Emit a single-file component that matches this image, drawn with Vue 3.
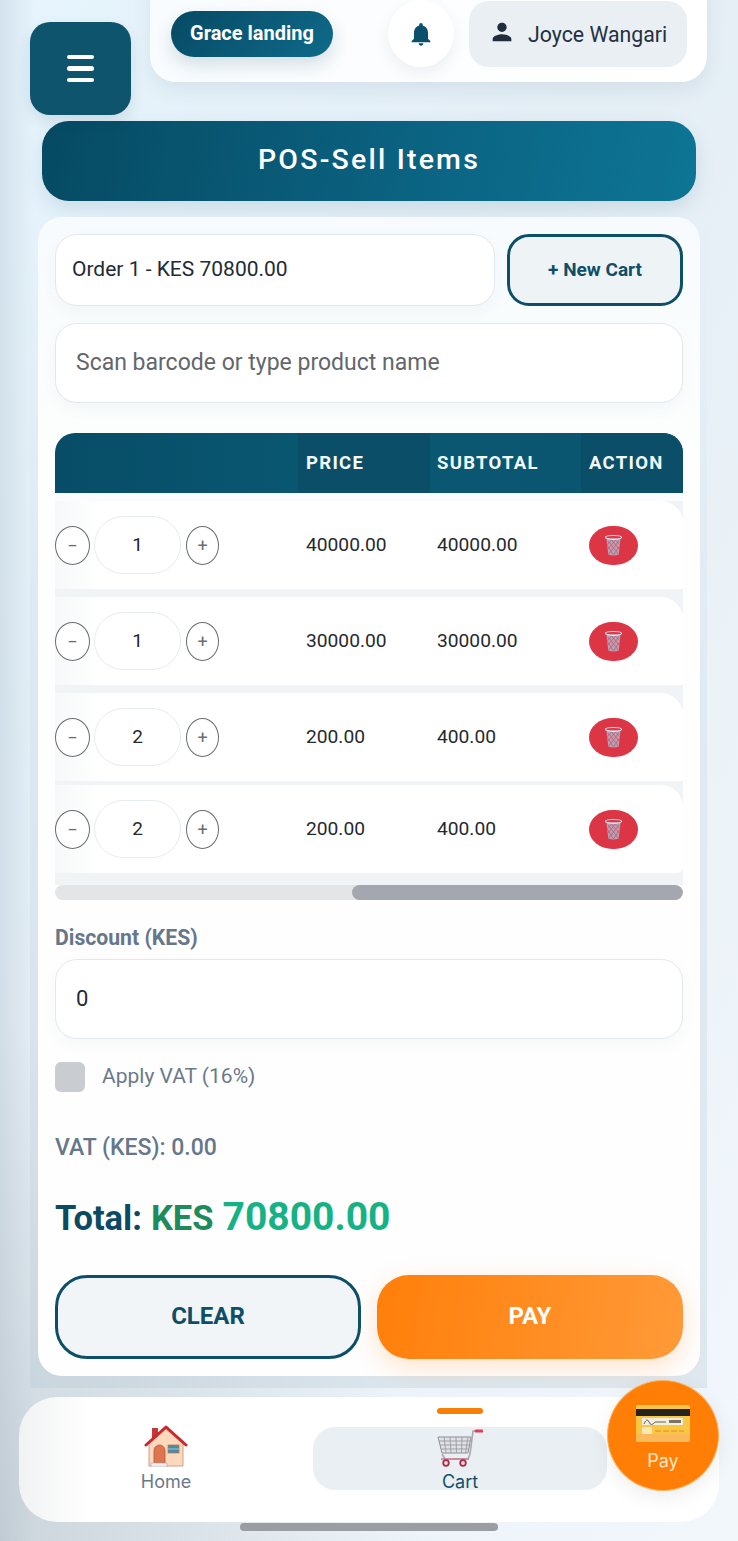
<script setup>
const rows = [
  { id: 1, qty: 1, price: '40000.00', subtotal: '40000.00', gap: 'sep' },
  { id: 2, qty: 1, price: '30000.00', subtotal: '30000.00', gap: 'sep' },
  { id: 3, qty: 2, price: '200.00', subtotal: '400.00', gap: 'tight' },
  { id: 4, qty: 2, price: '200.00', subtotal: '400.00', gap: 'end' }
]
</script>

<template>
  <div class="page">
    <header class="top">
      <button class="menu" aria-label="Menu"><span></span><span></span><span></span></button>
      <div class="topbar">
        <div class="branch">Grace landing</div>
        <div class="bell">
          <svg viewBox="0 0 24 24" width="28" height="28"><path fill="#0b4f6c" d="M12 22c1.100 0 2-.9 2-2h-4c0 1.100.9 2 2 2zm6-6v-5c0-3.070-1.630-5.640-4.500-6.320V4c0-.83-.67-1.500-1.500-1.500s-1.500.67-1.500 1.500v.68C7.640 5.360 6 7.920 6 11v5l-2 2v1h16v-1l-2-2z"/></svg>
        </div>
        <div class="user">
          <svg viewBox="0 0 24 24" width="28" height="28"><path fill="#1f2d3d" d="M12 12c2.210 0 4-1.790 4-4s-1.790-4-4-4-4 1.790-4 4 1.790 4 4 4zm0 2c-2.670 0-8 1.340-8 4v2h16v-2c0-2.660-5.330-4-8-4z"/></svg>
          <span>Joyce Wangari</span>
        </div>
      </div>
    </header>

    <h1 class="title">POS-Sell Items</h1>

    <main class="panel">
      <section class="card">
        <div class="order-row">
          <input class="field order" readonly value="Order 1 - KES 70800.00" />
          <button class="new-cart">+ New Cart</button>
        </div>
        <input class="field search" placeholder="Scan barcode or type product name" />

        <div class="table">
          <div class="thead">
            <div></div>
            <div class="th dark">PRICE</div>
            <div class="th">SUBTOTAL</div>
            <div class="th dark">ACTION</div>
          </div>
          <div class="tbody">
            <div v-for="r in rows" :key="r.id" class="row" :class="r.gap">
              <div class="qty">
                <button class="step minus">−</button>
                <div class="qty-val">{{ r.qty }}</div>
                <button class="step plus">+</button>
              </div>
              <div class="cell">{{ r.price }}</div>
              <div class="cell">{{ r.subtotal }}</div>
              <div class="cell">
                <button class="del" aria-label="Delete">
                  <svg viewBox="0 0 20 24" width="19" height="23">
                    <path d="M2.500 4 L4.500 21.500 Q10 23.500 15.500 21.500 L17.500 4 Z" fill="#b7a0b3" />
                    <path d="M4 7 L15 21 M7 5 L16 16 M11 5 L16.500 11 M3.500 12 L10 22 M16 7 L5 21 M13 5 L4 16 M9 5 L3.500 11 M16 13 L10 22" stroke="#c9566b" stroke-width=".8" fill="none" />
                    <ellipse cx="10" cy="3.500" rx="8.500" ry="2" fill="none" stroke="#efe0e4" stroke-width="1.200" />
                  </svg>
                </button>
              </div>
            </div>
          </div>
        </div>

        <div class="scrollbar"><div class="thumb"></div></div>

        <label class="disc-label">Discount (KES)</label>
        <input class="field discount" readonly value="0" />

        <div class="vat-check">
          <span class="box"></span>
          <span class="vat-text">Apply VAT (16%)</span>
        </div>

        <div class="vat-line">VAT (KES): 0.00</div>

        <div class="total">
          <span class="t-label">Total:</span>
          <span class="t-cur">KES</span>
          <span class="t-val">70800.00</span>
        </div>

        <div class="actions">
          <button class="btn clear">CLEAR</button>
          <button class="btn pay">PAY</button>
        </div>
      </section>
    </main>

    <nav class="nav">
      <a class="tab">
        <svg class="tab-icon home-icon" viewBox="0 0 44 42" width="44" height="42">
          <rect x="8" y="3" width="6" height="10" fill="#c5383a" />
          <path d="M5 19 L22 4 L39 19 V41 H5 Z" fill="#fcd9bd" stroke="#c98a70" stroke-width=".8" />
          <path d="M10 38 V25.500 A5.500 5.500 0 0 1 21 25.500 V38 Z" fill="#dd7550" stroke="#b9553a" stroke-width=".8" />
          <rect x="24" y="20" width="11" height="8" fill="#4d8aa6" stroke="#b9774f" stroke-width=".8" />
          <path d="M24 24 H35" stroke="#9cc7d8" stroke-width="1" />
          <rect x="7" y="38" width="16" height="4" fill="#eceef0" stroke="#a9a9b0" stroke-width=".6" />
          <path d="M2 20 L22 2 L42 20" fill="none" stroke="#c8282e" stroke-width="3" stroke-linecap="round" stroke-linejoin="round" />
        </svg>
        <span>Home</span>
      </a>
      <a class="tab active">
        <i class="indicator"></i>
        <svg class="tab-icon" viewBox="0 0 46 40" width="46" height="40">
          <path d="M1 10 L34 10 L31 26 L5 26 Z" fill="#e0e1e4" stroke="#8d8f96" stroke-width="1" />
          <path d="M7 10 L9 26 M13 10 L14 26 M19 10 L19.500 26 M25 10 L24.500 26 M31 10 L28.500 26 M2 14 H33 M3 18 H32 M4 22 H31.500" stroke="#999ba2" stroke-width=".9" />
          <path d="M5 27 L8 32 H31 L33 27 L36 4 H42" fill="none" stroke="#a9a9ae" stroke-width="1.600" />
          <path d="M39 4 H45" stroke="#d9405a" stroke-width="3" stroke-linecap="round" />
          <path d="M4 32 H32" stroke="#c78a9a" stroke-width="1.800" />
          <circle cx="9" cy="36" r="2.800" fill="#f0d8dd" stroke="#a82d4b" stroke-width="1.800" />
          <circle cx="26" cy="36" r="2.800" fill="#f0d8dd" stroke="#a82d4b" stroke-width="1.800" />
        </svg>
        <span>Cart</span>
      </a>
      <button class="fab">
        <svg viewBox="0 0 54 37" width="54" height="37">
          <rect x="0" y="0" width="54" height="37" rx="2" fill="#fac745" />
          <rect x="0" y="29" width="54" height="8" rx="2" fill="#fbb95c" />
          <rect x="0" y="4" width="54" height="7" fill="#26231e" />
          <rect x="6" y="13" width="41" height="7" fill="#f3eedd" />
          <path d="M8 19 Q11 12 13 17 T19 17 H30" fill="none" stroke="#55534a" stroke-width=".9" />
          <rect x="33" y="15" width="12" height="3" fill="#7a7460" />
          <rect x="6" y="22" width="10" height="7" rx="1" fill="#fbe6b4" />
          <path d="M19 26 H48" stroke="#e3a32f" stroke-width="1.500" stroke-dasharray="6 2" />
        </svg>
        <span>Pay</span>
      </button>
    </nav>

    <div class="home-bar"></div>
  </div>
</template>

<style>
html, body { margin: 0; padding: 0; }
</style>

<style scoped>
* { box-sizing: border-box; }
.page {
  width: 738px;
  height: 1541px;
  overflow: hidden;
  font-family: Roboto, "Liberation Sans", sans-serif;
  background:
    radial-gradient(ellipse 420px 520px at 0 100%, rgba(165, 175, 182, .42), rgba(165, 175, 182, 0)),
    linear-gradient(90deg, rgba(150, 170, 185, .24) 0, rgba(150, 170, 185, 0) 34px),
    linear-gradient(120deg, #e6f4fd 0%, #e4eef5 40%, #f2f7fc 100%);
  color: #1f2d3d;
}
button { font-family: inherit; border: 0; padding: 0; cursor: pointer; }

.top { display: flex; gap: 19px; padding: 0 31px 0 30px; height: 115px; }
.menu {
  margin-top: 22px;
  width: 101px;
  height: 93px;
  border-radius: 20px;
  background: #0f546d;
  display: flex;
  flex-direction: column;
  justify-content: center;
  align-items: center;
  gap: 7px;
  box-shadow: 0 6px 14px rgba(15, 60, 85, .12);
}
.menu span { width: 27px; height: 4.500px; border-radius: 3px; background: #fff; }
.topbar {
  flex: 1;
  height: 102px;
  margin-top: -20px;
  padding: 20px 0 0 21px;
  background: linear-gradient(90deg, #f9fcfe, #fff);
  border-radius: 0 0 26px 26px;
  display: flex;
  align-items: flex-start;
  box-shadow: 0 8px 20px rgba(20, 60, 90, .08);
  position: relative;
}
.branch {
  width: 162px;
  height: 46px;
  margin-top: 11px;
  border-radius: 23px;
  background: linear-gradient(135deg, #064a63, #0f6a8a);
  color: #fff;
  font-weight: 700;
  font-size: 20px;
  line-height: 45px;
  text-align: center;
  box-shadow: 0 8px 18px rgba(15, 70, 95, .16);
}
.bell {
  width: 66px;
  height: 67px;
  margin: 0 15px 0 55px;
  border-radius: 50%;
  background: #fff;
  display: flex;
  align-items: center;
  justify-content: center;
  box-shadow: 0 6px 16px rgba(20, 60, 90, .07);
}
.user {
  width: 218px;
  height: 66px;
  margin-top: 1px;
  background: #e9eff3;
  border-radius: 20px;
  display: flex;
  align-items: center;
  gap: 12px;
  padding-left: 19px;
  font-size: 21.300px;
  color: #25303f;
}
.user svg { margin-top: -5px; }

.title {
  margin: 6px 42px 16px;
  height: 80px;
  border-radius: 27px;
  background: linear-gradient(100deg, #064a63 0%, #0b6483 60%, #0e7595 100%);
  color: #fff;
  font-size: 28.500px;
  font-weight: 500;
  letter-spacing: 2.200px;
  line-height: 78px;
  text-align: center;
  box-shadow: 0 8px 20px rgba(15, 70, 95, .12);
}

.panel {
  margin: 0 31px 9px 30px;
  padding: 0 7px 12px 8px;
  background: linear-gradient(180deg, rgba(190, 212, 228, 0) 0%, rgba(190, 212, 228, .26) 40%, rgba(180, 198, 210, .3) 100%);
}
.card {
  height: 1159px;
  padding: 17px;
  border-radius: 24px;
  background: linear-gradient(180deg, #f7fbfd 0, #fefefe 25%, #fefefe 100%);
}
.order-row { display: flex; gap: 12px; margin-bottom: 17px; }
.field {
  display: block;
  width: 100%;
  background: #fff;
  border: 1.500px solid #e2e9ee;
  border-radius: 22px;
  outline: 0;
  font-family: inherit;
  color: #222b33;
  box-shadow: 0 6px 16px rgba(30, 70, 95, .04);
}
.order { flex: 0 0 440px; height: 72px; padding: 0 16px 2px; font-size: 21px; }
.new-cart {
  flex: 1;
  height: 72px;
  border: 3.500px solid #0d4f68;
  border-radius: 22px;
  background: #eef3f6;
  color: #0d4f68;
  font-size: 19px;
  font-weight: 700;
  line-height: 62px;
}
.search { height: 80px; padding: 0 20px 2px; font-size: 23px; }
.search::placeholder { color: #62676c; opacity: 1; }

.table { margin-top: 30px; }
.thead {
  display: grid;
  grid-template-columns: 243px 132px 151px 102px;
  height: 60px;
  border-radius: 20px 20px 0 0;
  overflow: hidden;
  background: linear-gradient(90deg, #074d67, #0a5873 45%, #0a5570);
}
.th {
  color: #f3f8fa;
  font-size: 18.500px;
  font-weight: 700;
  letter-spacing: 1.300px;
  line-height: 60px;
  padding-left: 8px;
}
.th:nth-child(3) { padding-left: 7px; }
.th.dark { background: #0a4e68; }
.tbody {
  display: flex;
  flex-direction: column;
  padding: 8px 0 12px;
  background: linear-gradient(180deg, #fbfcfd 8px, #f1f4f6 8px, #f1f4f6 100%);
}
.row {
  display: grid;
  grid-template-columns: 243px 132px 151px 102px;
  align-items: center;
  height: 88px;
  background: linear-gradient(90deg, #f7f8f9 0, #fff 44px);
  border-radius: 0 22px 0 0;
  margin-bottom: 8px;
}
.row.tight { margin-bottom: 4px; }
.row.end { margin-bottom: 0; border-radius: 0 22px 6px 0; }
.qty { display: flex; align-items: center; }
.step {
  height: 39px;
  border: 1.800px solid #6a6d70;
  border-radius: 50%;
  background: #fff;
  color: #6a6e72;
  font-size: 18px;
  line-height: 33px;
}
.minus { width: 35px; }
.plus { width: 33px; margin-left: 5px; }
.qty-val {
  width: 87px;
  height: 58px;
  margin-left: 4px;
  border: 1.500px solid #e6ecef;
  border-radius: 29px;
  text-align: center;
  line-height: 55px;
  font-size: 19px;
  color: #25292d;
}
.cell { padding-left: 8px; padding-bottom: 2px; font-size: 19.200px; color: #25292d; }
.cell:nth-child(3) { padding-left: 7px; }
.cell:last-child { padding-left: 8px; padding-bottom: 0; }
.del {
  width: 49px;
  height: 39px;
  border-radius: 50%/52%;
  background: #dc3545;
  display: flex;
  align-items: center;
  justify-content: center;
}
.scrollbar { height: 15px; border-radius: 8px; background: #e4e5e6; position: relative; overflow: hidden; }
.thumb { position: absolute; left: 297px; right: 0; top: 0; bottom: 0; border-radius: 8px; background: #a5a7b0; }

.disc-label {
  display: block;
  margin-top: 26px;
  height: 24px;
  line-height: 24px;
  font-size: 21.200px;
  font-weight: 700;
  color: #667789;
}
.discount { margin-top: 9px; height: 80px; padding: 0 20px 2px; font-size: 22px; }
.vat-check {
  display: flex;
  align-items: center;
  gap: 17px;
  margin-top: 23px;
  height: 30px;
  font-size: 21px;
  color: #6b7a8a;
}
.vat-text { margin-top: -2px; }
.box { width: 30px; height: 30px; border-radius: 6px; background: #c9ccd1; }
.vat-line { margin-top: 44px; height: 24px; line-height: 24px; font-size: 23px; font-weight: 500; color: #667789; }
.total {
  margin-top: 33px;
  height: 48px;
  line-height: 48px;
  font-weight: 700;
  display: flex;
  align-items: baseline;
  gap: 9px;
}
.t-label { font-size: 34.500px; color: #0b4a63; }
.t-cur { font-size: 34.500px; color: #1f8a5b; }
.t-val { font-size: 39px; color: #16b286; }
.actions { display: flex; gap: 16px; margin-top: 34px; }
.btn { flex: 0 0 306px; height: 84px; border-radius: 32px; font-size: 24px; font-weight: 700; padding-bottom: 2px; }
.clear { border: 3.500px solid #0d4f68; background: #f1f5f7; color: #0d4f68; }
.pay {
  background: linear-gradient(100deg, #ff7f0a, #ff9a38);
  color: #fff;
  box-shadow: 0 8px 26px rgba(255, 130, 20, .22);
}

.nav {
  position: relative;
  margin: 0 19px;
  height: 125px;
  padding-top: 30px;
  display: flex;
  align-items: flex-start;
  border-radius: 38px;
  background: linear-gradient(90deg, #f1f2f3 0, #fff 10%);
}
.tab {
  position: relative;
  width: 294px;
  height: 63px;
  border-radius: 22px;
  display: flex;
  flex-direction: column;
  align-items: center;
  font-family: Inter, Roboto, sans-serif;
  font-size: 18px;
  line-height: 23px;
  color: #6b7a88;
}
.tab.active { background: #e9eff3; color: #12506a; }
.tab-icon { display: block; flex: none; height: 40px; margin-bottom: 3px; }
.home-icon { height: 42px; margin-top: -2px; }
.indicator {
  position: absolute;
  top: -19px;
  left: 124px;
  width: 46px;
  height: 6px;
  border-radius: 3px;
  background: #f77f05;
}
.fab {
  position: absolute;
  top: -17px;
  right: 0;
  width: 112px;
  height: 111px;
  border-radius: 50%;
  background: #ff7f06;
  border: 1px solid #ffb25c;
  display: flex;
  flex-direction: column;
  align-items: center;
  padding-top: 24px;
  gap: 8px;
  font-family: Inter, Roboto, sans-serif;
  font-size: 18px;
  color: #ffe5c8;
  box-shadow: 0 6px 18px rgba(80, 90, 100, .1);
}
.home-bar {
  width: 258px;
  height: 8px;
  margin: 1px 0 0 240px;
  border-radius: 4px;
  background: #9a9ea2;
}
</style>
